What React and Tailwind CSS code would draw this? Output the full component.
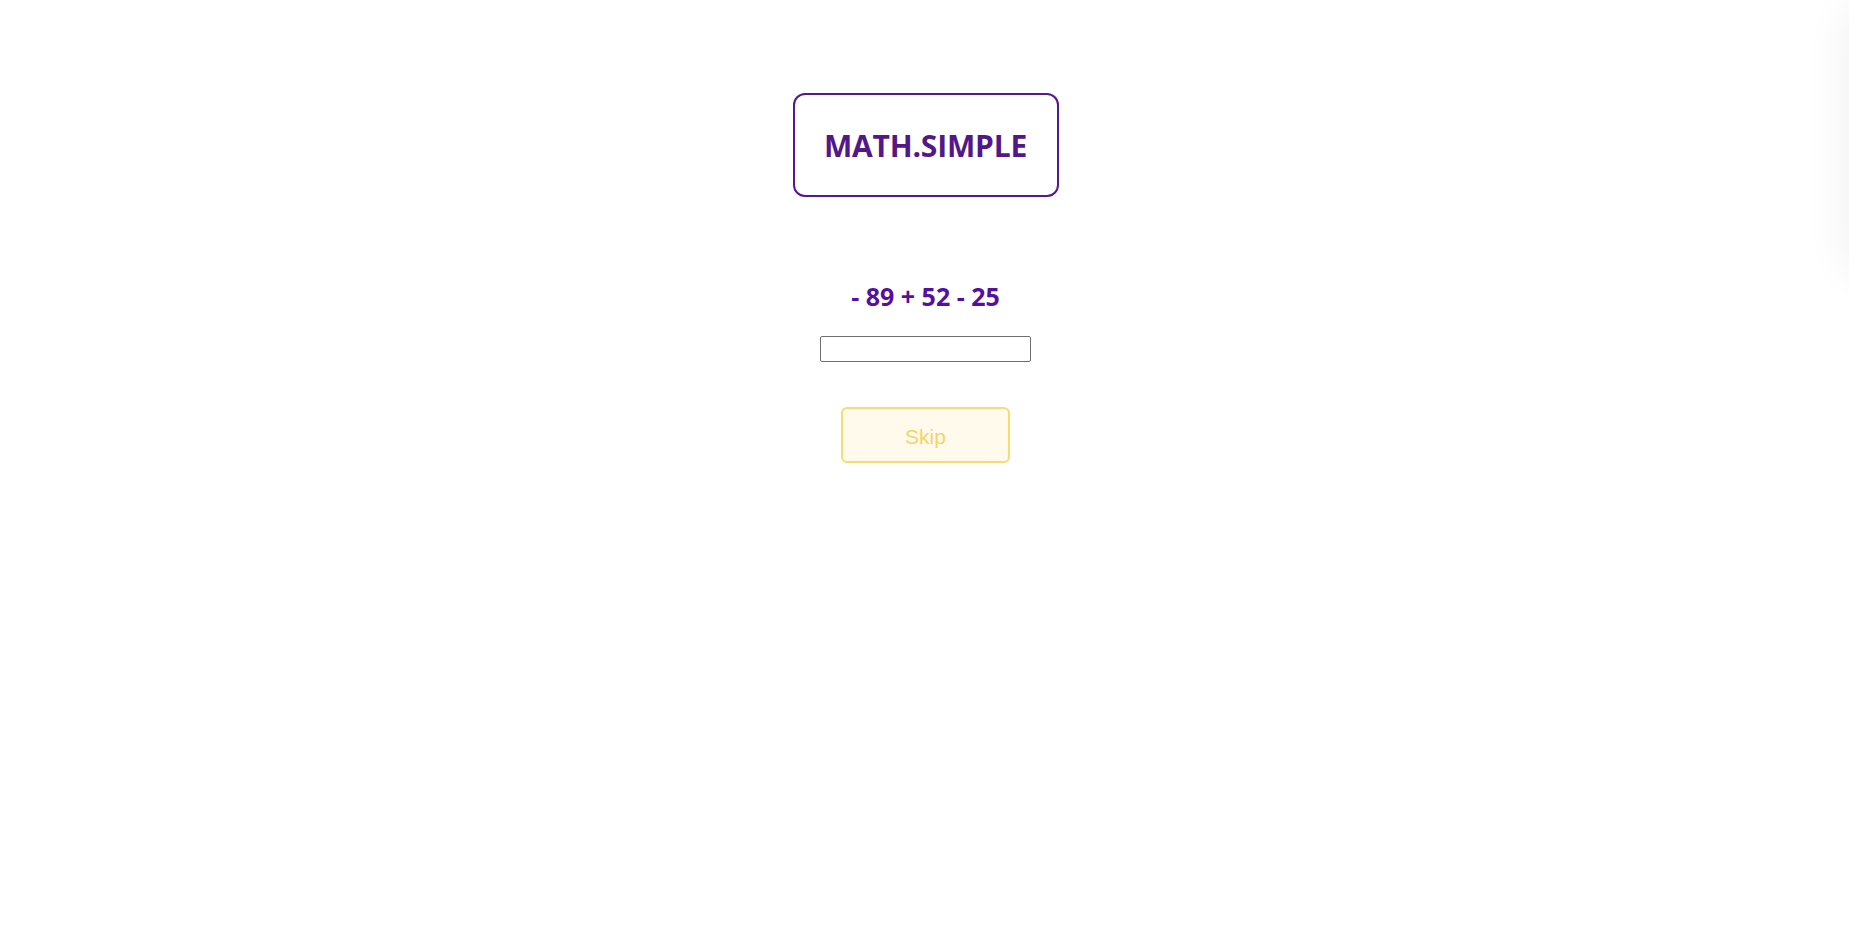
// Simple math practice screen
const App = () => (
  <div className="relative min-h-screen bg-white overflow-hidden">
    <div className="absolute -right-[40px] top-[10px] h-[260px] w-[40px] bg-white shadow-[0_0_45px_rgba(0,0,0,0.07)]" />
    <div className="flex flex-col items-center pl-[2px]">
      <div className="mt-[93px] flex h-[104px] w-[266px] items-center justify-center rounded-[12px] border-2 border-[#56178f]">
        <span className="font-['Open_Sans',sans-serif] text-[30px] font-bold tracking-[-0.2px] text-[#52188a]">MATH.SIMPLE</span>
      </div>
      <div className="mt-[83px] font-['Open_Sans',sans-serif] text-[25px] font-bold leading-[32px] text-[#5510a3]">
        - 89 + 52 - 25
      </div>
      <input
        type="text"
        className="mt-[24px] h-[26px] w-[211px] border border-[#6f6f6f] rounded-[2px] bg-white px-1 text-sm outline-none"
      />
      <button className="mt-[45px] h-[56px] w-[169px] rounded-[6px] border-2 border-[#f7dc72] bg-[#fffaec] pt-[3px] font-['Liberation_Sans',Arial,sans-serif] text-[21px] text-[#f5d466]">
        Skip
      </button>
    </div>
  </div>
);

export default App;
